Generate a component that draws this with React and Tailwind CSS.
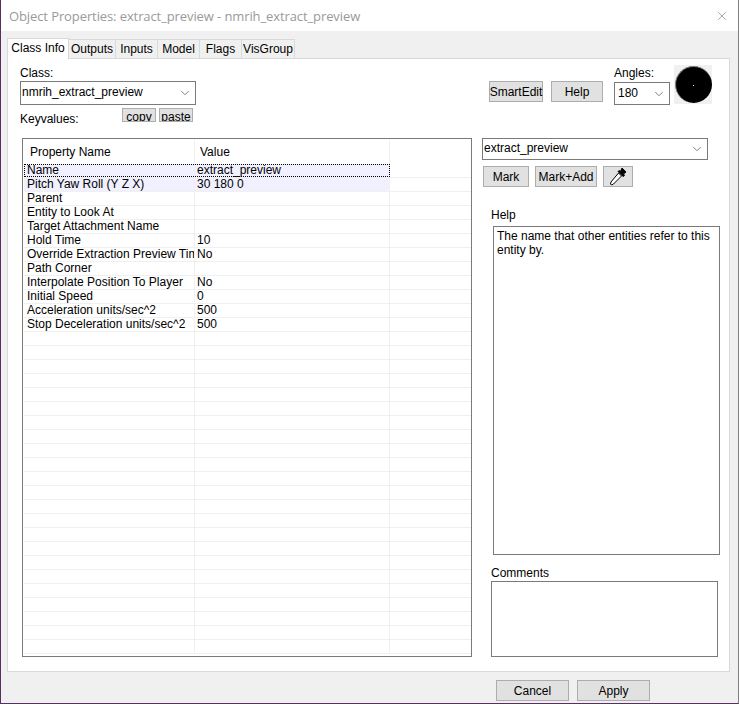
import React from 'react';
import { ChevronDown, X } from 'lucide-react';

const tabs = [
  { label: 'Outputs', width: 'w-[47px]' },
  { label: 'Inputs', width: 'w-[42px]' },
  { label: 'Model', width: 'w-[42px]' },
  { label: 'Flags', width: 'w-[42px]' },
  { label: 'VisGroup', width: 'w-[53px]' },
];

const props = [
  ['Name', 'extract_preview'],
  ['Pitch Yaw Roll (Y Z X)', '30 180 0'],
  ['Parent', ''],
  ['Entity to Look At', ''],
  ['Target Attachment Name', ''],
  ['Hold Time', '10'],
  ['Override Extraction Preview Time', 'No'],
  ['Path Corner', ''],
  ['Interpolate Position To Player', 'No'],
  ['Initial Speed', '0'],
  ['Acceleration units/sec^2', '500'],
  ['Stop Deceleration units/sec^2', '500'],
];

const rows = [...props, ...Array(23).fill(['', ''])];

function Button({ children, className = '' }) {
  return (
    <div className={`flex items-center justify-center h-[21px] bg-[#e1e1e1] border border-[#adadad] ${className}`}>
      {children}
    </div>
  );
}

function Combo({ value, className = '' }) {
  return (
    <div className={`flex items-center justify-between bg-white border border-[#7a7a7a] pl-[1px] pr-[3px] ${className}`}>
      <span className="-mt-[2px]">{value}</span>
      <ChevronDown className="w-[14px] h-[14px] text-[#555555]" strokeWidth={1.25} />
    </div>
  );
}

function Eyedropper() {
  return (
    <svg width="22" height="21" viewBox="0 0 22 21">
      <path d="M15 2 L19 6 L16.5 8 L17.5 9.5 L16 10.5 L11 5.5 L12.5 4.5 L13.5 5.5 Z" fill="#000" stroke="#000" />
      <path d="M11.5 7 L14.5 10 L6.5 18 L4.5 19 L3.5 18 L4 16 Z" fill="#fff" stroke="#000" strokeWidth="1" />
    </svg>
  );
}

function AngleDial() {
  return (
    <div className="w-[38px] h-[39px] bg-[#f0f0f0] flex items-center justify-center">
      <div className="w-[37px] h-[37px] rounded-full bg-black border-t border-l border-t-[#808080] border-l-[#808080] flex items-center justify-center">
        <div className="w-[1px] h-[1px] bg-white" />
      </div>
    </div>
  );
}

export default function App() {
  return (
    <div className="w-[739px] h-[704px] bg-[#f0f0f0] border-l border-r border-b border-l-[#5a2d63] border-r-[#808080] border-b-[#5a2d63] flex flex-col text-[12px] leading-[14px] text-black font-['Liberation_Sans',sans-serif] overflow-hidden">
      {/* title bar */}
      <div className="h-[31px] bg-white flex items-center justify-between pl-[8px] pr-[9px] shrink-0">
        <span className="text-[13px] text-[#9a9a9a] font-['Open_Sans',sans-serif] tracking-[-0.1px]">
          Object Properties: extract_preview - nmrih_extract_preview
        </span>
        <X className="w-[14px] h-[14px] text-[#8a8a8a]" strokeWidth={1.25} />
      </div>

      {/* tabs */}
      <div className="flex items-end h-[27px] pl-[6px] shrink-0 relative z-10">
        <div className="w-[62px] h-[21px] -mb-[1px] bg-white border border-b-0 border-[#d9d9d9] flex items-center justify-center pb-[2px]">
          Class Info
        </div>
        {tabs.map((tab) => (
          <div
            key={tab.label}
            className={`${tab.width} h-[19px] bg-[#f0f0f0] border border-l-0 border-b-0 border-[#d9d9d9] flex items-center justify-center`}
          >
            {tab.label}
          </div>
        ))}
      </div>

      {/* tab page */}
      <div className="w-[723px] h-[614px] ml-[6px] bg-white border border-[#d9d9d9] shrink-0 flex flex-col">
        <div className="h-[79px] flex shrink-0">
          <div className="w-[481px] pl-[12px] pt-[7px]">
            <div>Class:</div>
            <Combo value="nmrih_extract_preview" className="w-[176px] h-[24px] mt-[1px]" />
            <div className="flex mt-[3px]">
              <div className="w-[102px] pt-[4px]">Keyvalues:</div>
              <div className="w-[34px] h-[14px] bg-[#e1e1e1] border border-[#adadad] overflow-hidden text-center leading-[16px]">copy</div>
              <div className="w-[34px] h-[14px] ml-[3px] bg-[#e1e1e1] border border-[#adadad] overflow-hidden text-center leading-[16px]">paste</div>
            </div>
          </div>
          <div className="flex pt-[22px]">
            <Button className="w-[54px] bg-[#cce4f7] border-[#005499] ml-[0px]">SmartEdit</Button>
            <Button className="w-[52px] ml-[8px]">Help</Button>
          </div>
          <div className="ml-[11px] pt-[7px]">
            <div>Angles:</div>
            <Combo value="180" className="w-[56px] h-[23px] mt-[2px] pl-[3px]" />
          </div>
          <div className="ml-[4px] pt-[6px]">
            <AngleDial />
          </div>
        </div>

        <div className="flex">
          {/* property grid */}
          <div className="w-[450px] h-[519px] ml-[14px] border border-[#7a7a7a] overflow-hidden pl-[1px]">
            <div className="flex h-[25px]">
              <div className="w-[171px] border-r border-[#f0f0f0] pl-[6px] flex items-center">Property Name</div>
              <div className="w-[195px] border-r border-[#f0f0f0] pl-[5px] flex items-center">Value</div>
            </div>
            {rows.map(([name, value], i) => (
              <div key={i} className="flex h-[14px] border-b border-[#f0f0f0] leading-[13px]">
                <div className={`w-[366px] flex ${i === 0 ? 'outline-1 outline-dotted outline-black -outline-offset-1' : ''} ${i < 2 ? 'bg-[#f0f0ff]' : ''}`}>
                  <div className="w-[171px] border-r border-[#f0f0f0] pl-[3px] whitespace-nowrap overflow-hidden">{name}</div>
                  <div className="w-[195px] border-r border-[#f0f0f0] pl-[2px]">{value}</div>
                </div>
              </div>
            ))}
          </div>

          {/* right side */}
          <div className="ml-[10px] w-[238px]">
            <Combo value="extract_preview" className="w-[226px] h-[22px]" />
            <div className="flex items-start mt-[6px] ml-[1px]">
              <Button className="w-[46px]">Mark</Button>
              <Button className="w-[62px] ml-[6px]">Mark+Add</Button>
              <Button className="w-[30px] ml-[6px]"><Eyedropper /></Button>
            </div>
            <div className="ml-[9px] mt-[21px]">Help</div>
            <div className="ml-[11px] mt-[4px] w-[227px] h-[329px] border border-[#7a7a7a] px-[3px] pt-[2px] leading-[14px]">
              The name that other entities refer to this entity by.
            </div>
            <div className="ml-[9px] mt-[11px]">Comments</div>
            <div className="ml-[9px] mt-[1px] w-[227px] h-[76px] border border-[#7a7a7a]" />
          </div>
        </div>
      </div>

      {/* dialog buttons */}
      <div className="flex pl-[495px] pt-[8px]">
        <Button className="w-[73px]">Cancel</Button>
        <Button className="w-[73px] ml-[8px]">Apply</Button>
      </div>
    </div>
  );
}
